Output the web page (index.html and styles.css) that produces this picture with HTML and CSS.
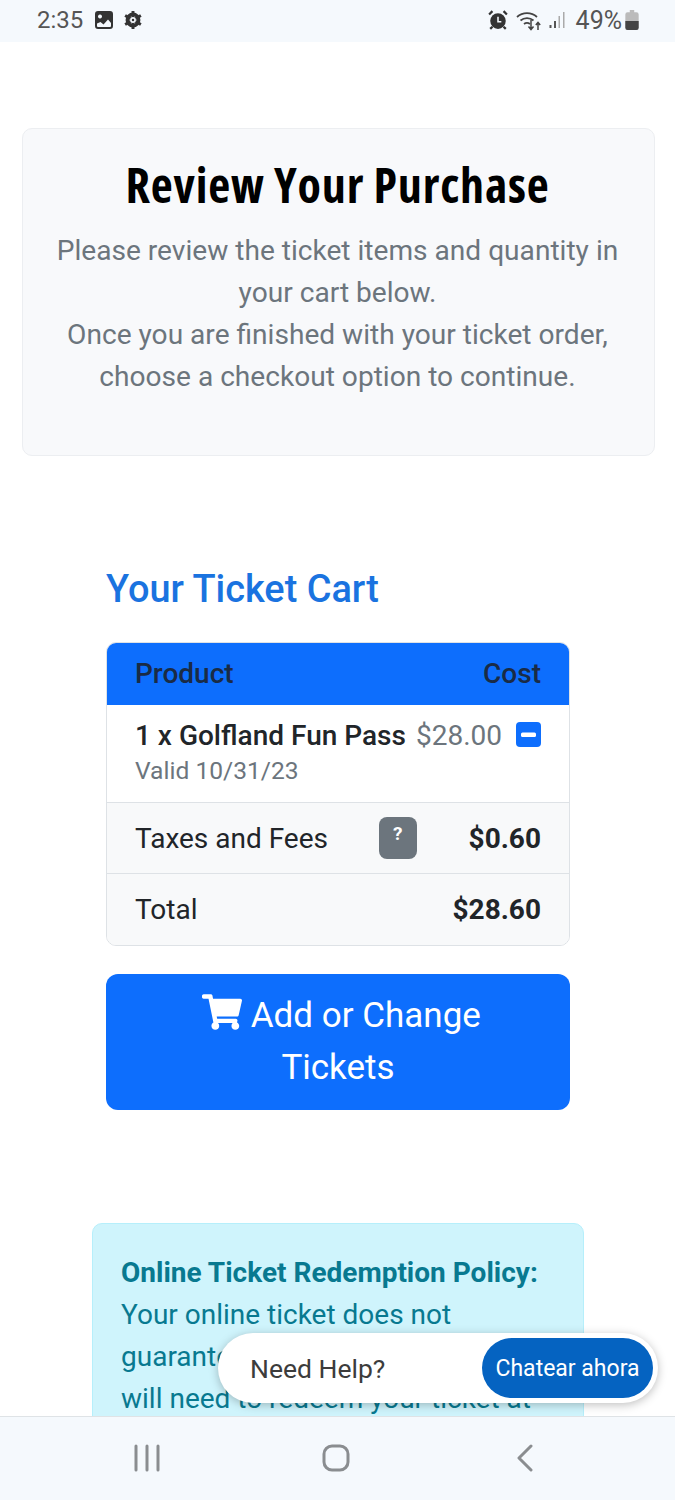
FILE: index.html
```html
<!DOCTYPE html>
<html lang="en">
<head>
<meta charset="utf-8">
<title>Review Your Purchase</title>
<link rel="stylesheet" href="styles.css">
</head>
<body>
<div class="status">
  <div class="status-side">
    <span class="time">2:35</span>
    <svg class="st-img" viewBox="0 0 18 18"><path fill="#333" fill-rule="evenodd" d="M3 0h12a3 3 0 0 1 3 3v12a3 3 0 0 1-3 3H3a3 3 0 0 1-3-3V3a3 3 0 0 1 3-3zM2 12.500V15a1 1 0 0 0 1 1h12a1 1 0 0 0 1-1v-3l-3-3.500-4.500 5-3-2.500zM5 3.500a2 2 0 1 0 .01 0z"/></svg>
    <svg class="st-gear" viewBox="0 0 16 16"><circle cx="8" cy="8" r="5" fill="none" stroke="#333" stroke-width="3.200"/><path stroke="#333" stroke-width="2.600" d="M8 0v16M1 4l14 8M1 12l14-8"/><circle cx="8" cy="8" r="2.600" fill="#f5f9fd"/><circle cx="8" cy="8" r="1.100" fill="#333"/></svg>
  </div>
  <div class="status-side">
    <svg class="st-alarm" viewBox="0 0 18 18"><circle cx="9" cy="10" r="7" fill="#333"/><path stroke="#333" stroke-width="2" d="M1 4l3-3M17 4l-3-3M4 15l-2 2M14 15l2 2"/><path fill="none" stroke="#f5f9fd" stroke-width="1.400" d="M9 6v4.500h3"/></svg>
    <svg class="st-wifi" viewBox="0 0 30 22"><g fill="none" stroke="#444" stroke-width="1.800"><path d="M1 8a15 15 0 0 1 20 0"/><path d="M4.500 11.500a10 10 0 0 1 13 0"/><path d="M8 15a5 5 0 0 1 6 0"/></g><path stroke="#444" stroke-width="1.500" fill="none" d="M15 11v9M12.500 17.500l2.500 3 2.500-3M22 21v-7M19.800 16l2.200-2.500 2.200 2.500"/></svg>
    <svg class="st-signal" viewBox="0 0 16 18"><rect x="0" y="14" width="2" height="3" fill="#555"/><rect x="4.500" y="10" width="2" height="7" fill="#555"/><rect x="9" y="5" width="1.500" height="12" fill="#aaa"/><rect x="13.500" y="1" width="1.500" height="16" fill="#aaa"/></svg>
    <span class="batt-text">49%</span>
    <svg class="st-batt" viewBox="0 0 12 18"><path fill="#bbb" d="M4 0h4v2h2a2 2 0 0 1 2 2v12a2 2 0 0 1-2 2H2a2 2 0 0 1-2-2V4a2 2 0 0 1 2-2h2z"/><path fill="#444" d="M0 10h12v6a2 2 0 0 1-2 2H2a2 2 0 0 1-2-2z"/></svg>
  </div>
</div>

<main class="page">
  <section class="hero">
    <h1>Review Your Purchase</h1>
    <p>Please review the ticket items and quantity in your cart below.<br>Once you are finished with your ticket order, choose a checkout option to continue.</p>
  </section>

  <section class="cart">
    <h2>Your Ticket Cart</h2>
    <div class="table">
      <div class="row head"><span>Product</span><span>Cost</span></div>
      <div class="row item">
        <div class="item-info"><strong>1 x Golfland Fun Pass</strong><small>Valid 10/31/23</small></div>
        <div class="item-cost"><span>$28.00</span>
          <svg class="minus" viewBox="0 0 25 25"><rect width="25" height="25" rx="4" fill="#0d6efd"/><rect x="5" y="10.500" width="15" height="4.500" rx="1.500" fill="#fff"/></svg>
        </div>
      </div>
      <div class="row fees"><span class="fee-label">Taxes and Fees</span><span class="q">?</span><strong>$0.60</strong></div>
      <div class="row total"><span>Total</span><strong>$28.60</strong></div>
    </div>
    <a class="btn">
      <svg class="cart-ico" viewBox="0 0 576 512"><path fill="#fff" d="M528.120 301.319l47.273-208C578.806 78.301 567.391 64 551.990 64H159.208l-9.166-44.810C147.758 8.021 137.930 0 126.529 0H24C10.745 0 0 10.745 0 24v16c0 13.255 10.745 24 24 24h69.883l70.248 343.435C147.325 417.100 136 435.222 136 456c0 30.928 25.072 56 56 56s56-25.072 56-56c0-15.674-6.447-29.835-16.824-40h209.647C430.447 426.165 424 440.326 424 456c0 30.928 25.072 56 56 56s56-25.072 56-56c0-22.172-12.888-41.332-31.579-50.405l5.517-24.276c3.413-15.018-8.002-29.319-23.403-29.319H218.117l-6.545-32h293.145c11.206 0 20.920-7.754 23.403-18.681z"/></svg>
      Add or Change Tickets
    </a>
  </section>

  <section class="policy">
    <p><strong>Online Ticket Redemption Policy:</strong> Your online ticket does not guarantee admission. You<br>will need to redeem your ticket at the park entrance.</p>
  </section>
</main>

<div class="chat">
  <span class="chat-label">Need Help?</span>
  <span class="chat-btn">Chatear ahora</span>
</div>

<nav class="navbar">
  <svg class="nav-ico" viewBox="0 0 28 28"><path stroke="#8a8d90" stroke-width="3" stroke-linecap="round" d="M3 2v24M14 2v24M25 2v24"/></svg>
  <svg class="nav-ico" viewBox="0 0 28 28"><rect x="2" y="2" width="24" height="24" rx="8" fill="none" stroke="#8a8d90" stroke-width="3"/></svg>
  <svg class="nav-ico" viewBox="0 0 28 28"><path fill="none" stroke="#8a8d90" stroke-width="3" stroke-linecap="round" stroke-linejoin="round" d="M20 2L8 14l12 12"/></svg>
</nav>
</body>
</html>
```

FILE: styles.css
```css
* { box-sizing: border-box; }
html, body { margin: 0; padding: 0; }
body {
  width: 675px;
  height: 1500px;
  overflow: hidden;
  position: relative;
  background: #fff;
  font-family: Roboto, "Liberation Sans", sans-serif;
  color: #212529;
}
.status {
  height: 42px;
  background: #f5f9fd;
  display: flex;
  justify-content: space-between;
  align-items: center;
  padding: 0 36px 2px 37px;
  color: #555;
}
.status-side { display: flex; align-items: center; }
.time { font-size: 24px; margin-right: 12px; }
.st-img { width: 18px; height: 18px; margin-right: 11px; }
.st-gear { width: 18px; height: 18px; }
.st-alarm { width: 20px; height: 20px; margin-right: 8px; }
.st-wifi { width: 30px; height: 22px; margin-right: 3px; }
.st-signal { width: 17px; height: 18px; margin-right: 10px; }
.batt-text { font-size: 25px; }
.st-batt { width: 14px; height: 20px; margin-left: 3px; }

.page { padding: 86px 20px 0 22px; }
.hero {
  height: 328px;
  background: #f8f9fb;
  border: 1px solid #eceef1;
  border-radius: 10px;
  padding: 28px 22px 0 20px;
  text-align: center;
}
.hero h1 {
  margin: 0 0 17px;
  font-family: "Open Sans", sans-serif;
  font-stretch: condensed;
  font-size: 48px;
  letter-spacing: 0.800px;
  line-height: 56px;
  font-weight: 700;
  color: #000;
}
.hero p {
  margin: 0;
  font-size: 28.100px;
  line-height: 42px;
  color: #6c757d;
}
.cart { margin: 112px 85px 0 84px; }
.cart h2 {
  margin: 0 0 30px;
  font-size: 37.900px;
  line-height: 42px;
  padding-bottom: 2px;
  font-weight: 500;
  color: #1a73e0;
}
.table {
  border: 1px solid #dee2e6;
  border-radius: 10px;
  overflow: hidden;
  font-size: 28px;
}
.row {
  display: flex;
  justify-content: space-between;
  align-items: center;
  padding: 0 28px;
}
.head {
  height: 62px;
  padding-bottom: 2px;
  background: #0d6efd;
  font-weight: 500;
  color: #1a2b45;
}
.item {
  height: 98px;
  align-items: flex-start;
  padding: 14px 28px 0;
  border-bottom: 1px solid #dee2e6;
}
.item-info { display: flex; flex-direction: column; }
.item-info strong { font-weight: 500; line-height: 34px; white-space: nowrap; }
.item-info small { font-size: 24.600px; line-height: 36px; color: #6c757d; }
.item-cost { display: flex; align-items: center; color: #6c757d; line-height: 34px; }
.minus { width: 25px; height: 25px; margin: 0 0 3px 14px; }
.fees, .total { background: #f8f9fa; height: 71px; }
.fees { border-bottom: 1px solid #dee2e6; }
.fees strong, .total strong { font-weight: 700; }
.q {
  width: 38px;
  height: 42px;
  margin: 0 52px 0 auto;
  border-radius: 8px;
  background: #6c757d;
  color: #fff;
  font-size: 19px;
  font-weight: 700;
  text-align: center;
  line-height: 34px;
}
.btn {
  display: block;
  margin-top: 28px;
  height: 136px;
  padding: 16px 60px 0;
  background: #0d6efd;
  border-radius: 12px;
  color: #fff;
  font-size: 35px;
  line-height: 52px;
  text-align: center;
}
.cart-ico { width: 40px; height: 36px; margin-left: 7px; vertical-align: -3px; }
.policy {
  margin: 113px 71px 0 70px;
  height: 300px;
  padding: 28px;
  background: #cff4fc;
  border: 1px solid #b6effb;
  border-radius: 10px;
  color: #087990;
  font-size: 28px;
  line-height: 42px;
}
.policy p { margin: 0; }
.policy strong { font-weight: 700; }
.chat {
  position: absolute;
  left: 218px;
  top: 1333px;
  width: 440px;
  height: 70px;
  background: #fff;
  border-radius: 35px;
  box-shadow: 0 2px 10px rgba(0,0,0,.25);
  display: flex;
  align-items: center;
  justify-content: space-between;
  padding: 0 5px 0 32px;
}
.chat-label { font-size: 26.500px; color: #3c3c3c; }
.chat-btn {
  width: 171px;
  height: 60px;
  background: #0563c1;
  border-radius: 30px;
  color: #fff;
  font-size: 23px;
  line-height: 62px;
  text-align: center;
}
.navbar {
  position: absolute;
  left: 0;
  top: 1416px;
  width: 675px;
  height: 84px;
  background: #f5f9fd;
  border-top: 1px solid #dfe3e6;
  display: flex;
  justify-content: space-between;
  align-items: center;
  padding: 0 136px 2px 133px;
}
.nav-ico { width: 28px; height: 28px; }
```
